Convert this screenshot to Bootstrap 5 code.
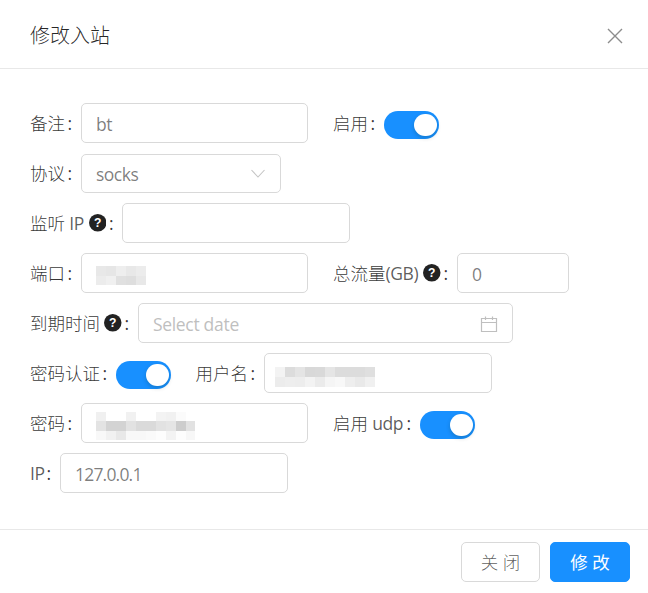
<!doctype html>
<html lang="zh"><head><meta charset="utf-8">
<link href="https://cdn.jsdelivr.net/npm/bootstrap@5.3.0/dist/css/bootstrap.min.css" rel="stylesheet">
<style>
html,body{height:593px;overflow:hidden;background:#fff}
body{font-family:"Open Sans","Noto Sans CJK SC",sans-serif;font-size:17.5px;font-weight:300;color:rgba(0,0,0,.65);line-height:1.5}
.dlg-head{height:69px;border-bottom:1px solid #e8e8e8;padding:3px 25px 0 30px}
.dlg-title{font-size:20px;margin:0;font-weight:300;color:rgba(0,0,0,.85);line-height:28px}
.dlg-x{background:none;border:0;padding:0;line-height:0}
.dlg-body{height:460px;padding:34px 30px 0}
.frow{height:50px;white-space:nowrap}
.lbl{margin:0;color:rgba(0,0,0,.8);line-height:42px;height:40px;display:flex;align-items:center}
.lat{display:inline-block;letter-spacing:-.4px;white-space:pre;font-weight:400;color:rgba(0,0,0,.65)}
.lat-ip{width:19.6px}.lat-gb{width:33.5px}.lat-udp{width:36px}.lat-ip2{width:14px}
.col{display:inline-block;width:3.5px;margin:0 10px 0 2.5px;font-weight:400}
.gapr{margin-left:25px}
.gapr-s{margin-left:24.4px}
.fld{height:40px;border:1px solid #d9d9d9;border-radius:5px;padding:1px 14px 0;color:rgba(0,0,0,.52);font-weight:400;line-height:38px;background:#fff;letter-spacing:-.5px}
.fld-num{letter-spacing:-.8px}
.fld-sel{height:39px;margin-top:1px;padding-right:15px}
.pad-m{padding-left:10px}
.w227{width:227px}.w228{width:228px}.w200{width:200px}.w112{width:112px}.w375{width:375px}
.qm{width:17.5px;height:17.5px;margin:0 0 0 4.4px;flex:none}
.tog{width:55px;height:28px;margin-top:8px;border-radius:14px;background:#1890ff;position:relative;flex:none}
.tog::after{content:"";position:absolute;width:22.5px;height:22.5px;border-radius:50%;background:#fff;right:2.5px;top:2.5px;box-shadow:0 2px 4px rgba(0,35,11,.2)}
.ph{color:#bfbfbf;letter-spacing:-.3px}
.mos{display:block;flex:none}
.mos-port{margin-top:11px}
.mos-user{margin-top:12px}
.mos-pass{margin-top:7px}
.dlg-foot{height:64px;border-top:1px solid #e8e8e8;padding:12px 18px 0 0;gap:10px}
.bt{height:40px;border-radius:5px;font-size:17.5px;font-weight:300;padding:0;line-height:38px}
.bt-g{width:79px;border:1px solid #d9d9d9;background:#fff;color:rgba(0,0,0,.65)}
.bt-p{width:80px;border:1px solid #1890ff;background:#1890ff;color:#fff;font-weight:400}
</style></head><body>
<div class="dlg-head d-flex align-items-center justify-content-between">
 <h5 class="dlg-title">修改入站</h5>
 <button class="dlg-x" aria-label="Close"><svg width="16" height="16" viewBox="0 0 16 16"><path d="M1 1L15 15M15 1L1 15" stroke="#8c8c8c" stroke-width="1.4" fill="none"/></svg></button>
</div>
<div class="dlg-body">
 <div class="frow d-flex align-items-start">
  <label class="lbl">备注<span class="col">:</span></label><div class="fld w227">bt</div>
  <label class="lbl gapr">启用<span class="col">:</span></label><div class="tog"></div>
 </div>
 <div class="frow d-flex align-items-start">
  <label class="lbl">协议<span class="col">:</span></label><div class="fld fld-sel w200 d-flex align-items-center justify-content-between">socks<svg width="14" height="14" viewBox="0 0 14 14"><path d="M.5 3L7 10L13.5 3" stroke="#c4c4c4" stroke-width="1.1" fill="none"/></svg></div>
 </div>
 <div class="frow d-flex align-items-start">
  <label class="lbl">监听<span class="lat lat-ip"> IP</span><svg class="qm" viewBox="0 0 18 18"><circle cx="9" cy="9" r="9" fill="#222"/><text x="9" y="13.5" font-size="12.5" font-weight="700" text-anchor="middle" fill="#fff" font-family="Liberation Sans">?</text></svg><span class="col">:</span></label><div class="fld w228"></div>
 </div>
 <div class="frow d-flex align-items-start">
  <label class="lbl">端口<span class="col">:</span></label><div class="fld w227 d-flex"><svg class="mos mos-port" width="50" height="19" viewBox="0 0 50 19" shape-rendering="crispEdges"><g fill="#e8e8e8"><rect width="10" height="10"/><rect x="30" width="10" height="10"/><rect x="40" y="10" width="10" height="9"/></g><rect x="10" width="10" height="10" fill="#e6e6e6"/><rect x="20" width="10" height="10" fill="#eee"/><rect x="40" width="10" height="10" fill="#ececec"/><rect y="10" width="10" height="9" fill="#ececec"/><rect x="10" y="10" width="10" height="9" fill="#f0f0f0"/><rect x="20" y="10" width="10" height="9" fill="#e0e0e0"/><rect x="30" y="10" width="10" height="9" fill="#dedede"/></svg></div>
  <label class="lbl gapr">总流量<span class="lat lat-gb">(GB)</span><svg class="qm" viewBox="0 0 18 18"><circle cx="9" cy="9" r="9" fill="#222"/><text x="9" y="13.5" font-size="12.5" font-weight="700" text-anchor="middle" fill="#fff" font-family="Liberation Sans">?</text></svg><span class="col">:</span></label><div class="fld fld-num w112">0</div>
 </div>
 <div class="frow d-flex align-items-start">
  <label class="lbl">到期时间<svg class="qm" viewBox="0 0 18 18"><circle cx="9" cy="9" r="9" fill="#222"/><text x="9" y="13.5" font-size="12.5" font-weight="700" text-anchor="middle" fill="#fff" font-family="Liberation Sans">?</text></svg><span class="col">:</span></label><div class="fld w375 ph d-flex align-items-center justify-content-between">Select date<svg width="18" height="18" viewBox="0 0 18 18"><path d="M1.5 3.5H16.5V16.5H1.5ZM1.5 7.5H16.5M5.5 1.5V5M12.5 1.5V5" stroke="#bfbfbf" stroke-width="1.2" fill="none"/></svg></div>
 </div>
 <div class="frow d-flex align-items-start">
  <label class="lbl">密码认证<span class="col">:</span></label><div class="tog"></div>
  <label class="lbl gapr-s">用户名<span class="col">:</span></label><div class="fld w228 pad-m d-flex"><svg class="mos mos-user" width="100" height="20" viewBox="0 0 100 20" shape-rendering="crispEdges"><rect width="10" height="10" fill="#f3f3f3"/><rect x="10" width="10" height="10" fill="#dcdcdc"/><rect x="20" width="10" height="10" fill="#e4e4e4"/><rect x="30" width="10" height="10" fill="#d8d8d8"/><rect x="40" width="10" height="10" fill="#d9d9d9"/><rect x="50" width="10" height="10" fill="#e5e5e5"/><rect x="60" width="30" height="10" fill="#dcdcdc"/><rect x="90" width="10" height="10" fill="#dfdfdf"/><rect y="10" width="10" height="10" fill="#ececec"/><rect x="10" y="10" width="10" height="10" fill="#eee"/><rect x="20" y="10" width="10" height="10" fill="#ededed"/><rect x="30" y="10" width="10" height="10" fill="#f3f3f3"/><rect x="40" y="10" width="10" height="10" fill="#ebebeb"/><rect x="50" y="10" width="10" height="10" fill="#f5f5f5"/><rect x="60" y="10" width="10" height="10" fill="#f8f8f8"/><rect x="70" y="10" width="10" height="10" fill="#eee"/><rect x="80" y="10" width="10" height="10" fill="#e9e9e9"/><rect x="90" y="10" width="10" height="10" fill="#f0f0f0"/></svg></div>
 </div>
 <div class="frow d-flex align-items-start">
  <label class="lbl">密码<span class="col">:</span></label><div class="fld w227 d-flex"><svg class="mos mos-pass" width="99" height="28" viewBox="0 0 99 28" shape-rendering="crispEdges"><rect width="10" height="9" fill="#f0f0f0"/><rect x="30" width="10" height="9" fill="#f1f1f1"/><rect x="60" width="10" height="9" fill="#f3f3f3"/><rect x="70" width="10" height="9" fill="#f1f1f1"/><rect x="80" width="10" height="9" fill="#fbfbfb"/><rect y="9" width="10" height="10" fill="#e3e3e3"/><rect x="10" y="9" width="20" height="10" fill="#d3d3d3"/><rect x="30" y="9" width="10" height="10" fill="#e2e2e2"/><rect x="40" y="9" width="20" height="10" fill="#dadada"/><rect x="60" y="9" width="10" height="10" fill="#e2e2e2"/><rect x="70" y="9" width="10" height="10" fill="#e5e5e5"/><rect x="80" y="9" width="10" height="10" fill="#cdcdcd"/><rect x="90" y="9" width="9" height="10" fill="#e2e2e2"/><rect y="19" width="10" height="9" fill="#f8f8f8"/><rect x="10" y="19" width="10" height="9" fill="#f1f1f1"/><rect x="20" y="19" width="10" height="9" fill="#e8e8e8"/><rect x="30" y="19" width="20" height="9" fill="#f8f8f8"/><rect x="50" y="19" width="10" height="9" fill="#fafafa"/><rect x="60" y="19" width="10" height="9" fill="#fdfdfd"/><rect x="70" y="19" width="10" height="9" fill="#f3f3f3"/><rect x="80" y="19" width="10" height="9" fill="#fdfdfd"/><rect x="90" y="19" width="9" height="9" fill="#f7f7f7"/></svg></div>
  <label class="lbl gapr">启用<span class="lat lat-udp"> udp</span><span class="col">:</span></label><div class="tog"></div>
 </div>
 <div class="frow d-flex align-items-start">
  <label class="lbl"><span class="lat lat-ip2">IP</span><span class="col">:</span></label><div class="fld fld-num w228">127.0.0.1</div>
 </div>
</div>
<div class="dlg-foot d-flex justify-content-end">
 <button class="bt bt-g">关 闭</button><button class="bt bt-p">修 改</button>
</div>
<script src="https://cdn.jsdelivr.net/npm/bootstrap@5.3.0/dist/js/bootstrap.bundle.min.js"></script>
</body></html>
